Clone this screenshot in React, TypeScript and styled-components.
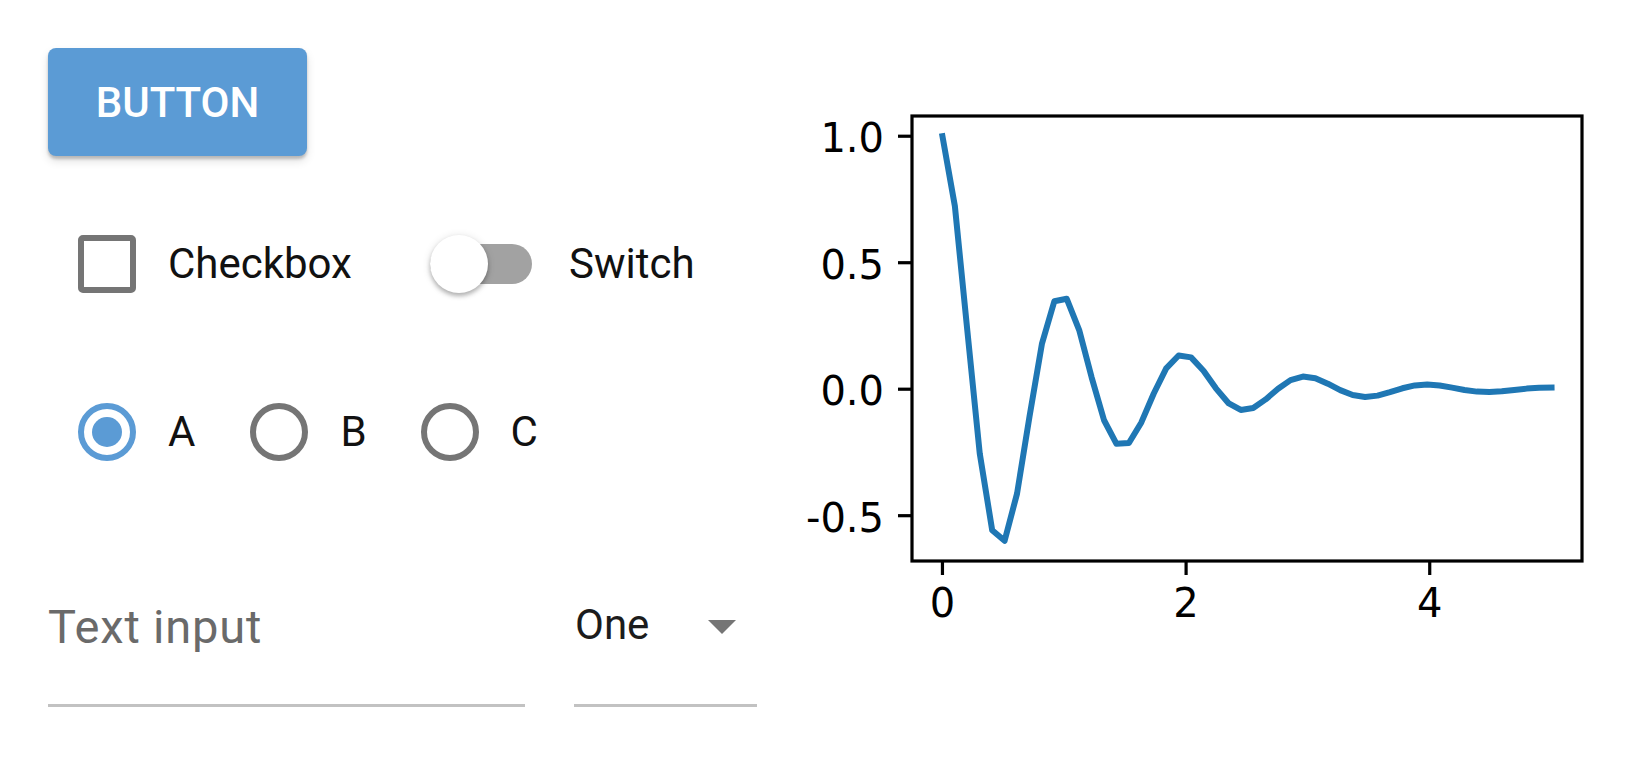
import styled, { createGlobalStyle } from "styled-components";

const GlobalStyle = createGlobalStyle`
  html, body {
    margin: 0;
    padding: 0;
    background: #ffffff;
  }
  body {
    font-family: Roboto, "Liberation Sans", sans-serif;
    color: #111;
  }
`;

const Page = styled.div`
  display: flex;
  flex-direction: row;
  align-items: flex-start;
  padding: 48px 0 0 48px;
  width: 1630px;
  height: 765px;
  box-sizing: border-box;
`;

const Left = styled.div`
  display: flex;
  flex-direction: column;
  width: 732px;
  flex-shrink: 0;
`;

const Button = styled.button`
  width: 259px;
  height: 108px;
  border: none;
  border-radius: 8px;
  background: #5b9bd5;
  color: #fff;
  font-family: Roboto, "Liberation Sans", sans-serif;
  font-weight: 500;
  font-size: 42px;
  text-transform: uppercase;
  box-shadow: 0 3px 3px rgba(0, 0, 0, 0.2), 0 5px 10px rgba(0, 0, 0, 0.12);
  cursor: pointer;
  padding: 0;
`;

const Row = styled.div<{ $top: number }>`
  display: flex;
  flex-direction: row;
  align-items: center;
  height: 80px;
  margin-top: ${({ $top }) => $top}px;
  padding-left: 30px;
`;

const Label = styled.span<{ $before?: number; $after?: number }>`
  font-size: 42px;
  line-height: 48px;
  color: #111;
  margin-left: ${({ $before }) => $before ?? 32}px;
  margin-right: ${({ $after }) => $after ?? 0}px;
`;

const Box = styled.div`
  width: 58px;
  height: 58px;
  box-sizing: border-box;
  border: 6px solid #757575;
  border-radius: 5px;
  flex-shrink: 0;
`;

const Track = styled.div`
  position: relative;
  width: 102px;
  height: 40px;
  border-radius: 20px;
  background: #a2a2a2;
  flex-shrink: 0;
`;

const Thumb = styled.div`
  position: absolute;
  left: 0;
  top: -9px;
  width: 58px;
  height: 58px;
  border-radius: 50%;
  background: #fff;
  box-shadow: 0 3px 4px rgba(0, 0, 0, 0.25), 0 1px 8px rgba(0, 0, 0, 0.12);
`;

const Radio = styled.div<{ $on?: boolean }>`
  width: 58px;
  height: 58px;
  box-sizing: border-box;
  border-radius: 50%;
  border: 6px solid ${({ $on }) => ($on ? "#5b9bd5" : "#757575")};
  display: flex;
  align-items: center;
  justify-content: center;
  flex-shrink: 0;
  &::after {
    content: "";
    display: ${({ $on }) => ($on ? "block" : "none")};
    width: 30px;
    height: 30px;
    border-radius: 50%;
    background: #5b9bd5;
  }
`;

const InputRow = styled.div`
  display: flex;
  flex-direction: row;
  gap: 49px;
  margin-top: 90px;
`;

const Field = styled.div<{ $width: number; $padTop: number }>`
  width: ${({ $width }) => $width}px;
  height: 145px;
  box-sizing: border-box;
  padding-top: ${({ $padTop }) => $padTop}px;
  border-bottom: 3px solid #c2c2c2;
  display: flex;
  flex-direction: row;
  align-items: flex-start;
  justify-content: space-between;
`;

const Placeholder = styled.span`
  font-size: 47px;
  line-height: 48px;
  letter-spacing: 0.8px;
  color: #6a6a6a;
`;

const Value = styled.span`
  font-size: 42px;
  line-height: 48px;
  color: #1c1c1c;
  padding-left: 1px;
`;

const Arrow = styled.div`
  width: 0;
  height: 0;
  margin-top: 19px;
  margin-right: 21px;
  border-left: 14.5px solid transparent;
  border-right: 14.5px solid transparent;
  border-top: 14px solid #757575;
`;

const ChartSvg = styled.svg`
  margin-top: 52px;
  flex-shrink: 0;
  font-family: "DejaVu Sans", "Liberation Sans", sans-serif;
`;

// axes geometry (svg coords)
const AX = { left: 132, top: 16, w: 670, h: 445 };
const N = 50;
const ts = Array.from({ length: N }, (_, i) => (5 * i) / (N - 1));
const ys = ts.map((t) => Math.cos(2 * Math.PI * t) * Math.exp(-t));
const yMin = Math.min(...ys);
const yMax = Math.max(...ys);
const yPad = (yMax - yMin) * 0.05;
const yLo = yMin - yPad;
const yHi = yMax + yPad;
const xLo = -0.25;
const xHi = 5.25;
const px = (x: number) => AX.left + ((x - xLo) / (xHi - xLo)) * AX.w;
const py = (y: number) => AX.top + ((yHi - y) / (yHi - yLo)) * AX.h;

function Chart() {
  const pts = ts.map((t, i) => `${px(t).toFixed(2)},${py(ys[i]).toFixed(2)}`).join(" ");
  const yTicks = [1.0, 0.5, 0.0, -0.5];
  const xTicks = [0, 2, 4];
  const bottom = AX.top + AX.h;
  return (
    <ChartSvg width={820} height={560} viewBox="0 0 820 560">
      <polyline
        points={pts}
        fill="none"
        stroke="#1f77b4"
        strokeWidth={6}
        strokeLinejoin="round"
        strokeLinecap="square"
      />
      <rect
        x={AX.left}
        y={AX.top}
        width={AX.w}
        height={AX.h}
        fill="none"
        stroke="#000"
        strokeWidth={3.2}
      />
      {yTicks.map((v) => (
        <g key={v}>
          <line x1={AX.left - 14} x2={AX.left} y1={py(v)} y2={py(v)} stroke="#000" strokeWidth={3.2} />
          <text x={AX.left - 28} y={py(v) + 16} fontSize={40} textAnchor="end" fill="#000">
            {v.toFixed(1)}
          </text>
        </g>
      ))}
      {xTicks.map((v) => (
        <g key={v}>
          <line x1={px(v)} x2={px(v)} y1={bottom} y2={bottom + 14} stroke="#000" strokeWidth={3.2} />
          <text x={px(v)} y={bottom + 56} fontSize={40} textAnchor="middle" fill="#000">
            {v}
          </text>
        </g>
      ))}
    </ChartSvg>
  );
}

export default function App() {
  return (
    <>
      <GlobalStyle />
      <Page>
        <Left>
          <div>
            <Button>Button</Button>
          </div>
          <Row $top={68}>
            <Box />
            <Label $after={78}>Checkbox</Label>
            <Track>
              <Thumb />
            </Track>
            <Label $before={37}>Switch</Label>
          </Row>
          <Row $top={88}>
            <Radio $on />
            <Label $after={55}>A</Label>
            <Radio />
            <Label $after={54}>B</Label>
            <Radio />
            <Label>C</Label>
          </Row>
          <InputRow>
            <Field $width={477} $padTop={41}>
              <Placeholder>Text input</Placeholder>
            </Field>
            <Field $width={183} $padTop={39}>
              <Value>One</Value>
              <Arrow />
            </Field>
          </InputRow>
        </Left>
        <Chart />
      </Page>
    </>
  );
}
